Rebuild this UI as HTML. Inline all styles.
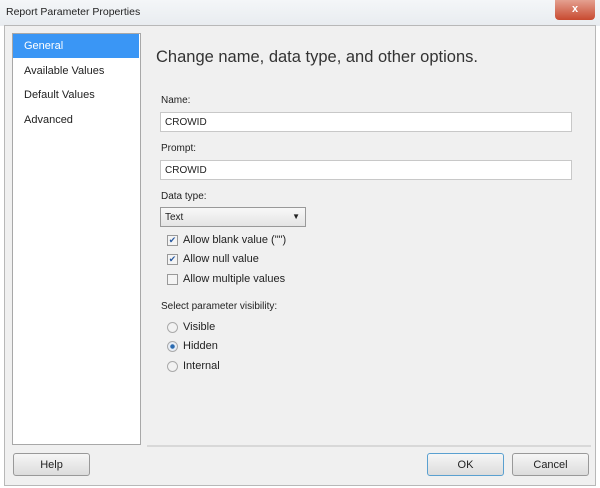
<!DOCTYPE html>
<html><head><style>
*{margin:0;padding:0;box-sizing:border-box}
body{width:600px;height:488px;background:#fff;font-family:"Liberation Sans",sans-serif;font-size:11px;color:#222;position:relative;overflow:hidden}
.a{position:absolute}
.title{left:0;top:0;width:600px;height:26px;background:linear-gradient(#f4f6f8,#e8ecf0)}
.frame{left:4px;top:25px;width:592px;height:461px;background:#f0f0f0;border:1px solid #b8b8b8}
.left{left:12px;top:33px;width:129px;height:412px;background:#fff;border:1px solid #a8a8a8}
.sel{left:13px;top:34px;width:126px;height:24px;background:#3a96f5;color:#fff;padding:6px 0 0 11px}
.it{left:24px}
.inp{background:#fff;border:1px solid #c8c8c8;height:20px;padding:4px 0 0 4px;font-size:10px}
.btn{border:1px solid #999;border-radius:3px;background:linear-gradient(#f6f6f6,#dcdcdc);text-align:center;height:23px;padding-top:5px}
.cb{width:11px;height:11px;border:1px solid #999;background:#f4f4f4;font-size:9px;line-height:9px;text-align:center;color:#2a5aa0}
.rd{width:11px;height:11px;border:1px solid #aaa;border-radius:50%;background:#f2f2f2}
</style></head><body>
<div class="a title"></div>
<div class="a" style="left:6px;top:6px;font-size:10.5px">Report Parameter Properties</div>
<div class="a" style="left:555px;top:0;width:40px;height:20px;border-radius:0 0 4px 4px;background:linear-gradient(#e4a090,#c84a30);color:#fff;text-align:center;font-weight:bold;font-size:11px;padding-top:3px">x</div>
<div class="a frame"></div>
<div class="a left"></div>
<div class="a sel">General</div>
<div class="a it" style="top:65px">Available Values</div>
<div class="a it" style="top:89px">Default Values</div>
<div class="a it" style="top:114px">Advanced</div>
<div class="a" style="left:156px;top:48px;font-size:16.5px;color:#333">Change name, data type, and other options.</div>
<div class="a" style="left:161px;top:95px;font-size:10px">Name:</div>
<div class="a inp" style="left:160px;top:112px;width:412px">CROWID</div>
<div class="a" style="left:161px;top:143px;font-size:10px">Prompt:</div>
<div class="a inp" style="left:160px;top:160px;width:412px">CROWID</div>
<div class="a" style="left:161px;top:191px;font-size:10px">Data type:</div>
<div class="a inp" style="left:160px;top:207px;width:146px;border-color:#999;background:linear-gradient(#f8f8f8,#e4e4e4)">Text<span style="position:absolute;right:5px;top:4px;font-size:8px">▼</span></div>
<div class="a cb" style="left:167px;top:235px">✔</div><div class="a" style="left:183px;top:234px">Allow blank value ("")</div>
<div class="a cb" style="left:167px;top:254px">✔</div><div class="a" style="left:183px;top:253px">Allow null value</div>
<div class="a cb" style="left:167px;top:274px"></div><div class="a" style="left:183px;top:273px">Allow multiple values</div>
<div class="a" style="left:161px;top:301px;font-size:10px">Select parameter visibility:</div>
<div class="a rd" style="left:167px;top:322px"></div><div class="a" style="left:183px;top:321px">Visible</div>
<div class="a rd" style="left:167px;top:341px;background:radial-gradient(#2a6ab0 30%,#e8eef6 40%)"></div><div class="a" style="left:183px;top:340px">Hidden</div>
<div class="a rd" style="left:167px;top:361px"></div><div class="a" style="left:183px;top:360px">Internal</div>
<div class="a" style="left:147px;top:445px;width:444px;height:2px;background:#d8d8d8"></div>
<div class="a btn" style="left:13px;top:453px;width:77px">Help</div>
<div class="a btn" style="left:427px;top:453px;width:77px;border-color:#5aa0d0">OK</div>
<div class="a btn" style="left:512px;top:453px;width:77px">Cancel</div>
</body></html>
